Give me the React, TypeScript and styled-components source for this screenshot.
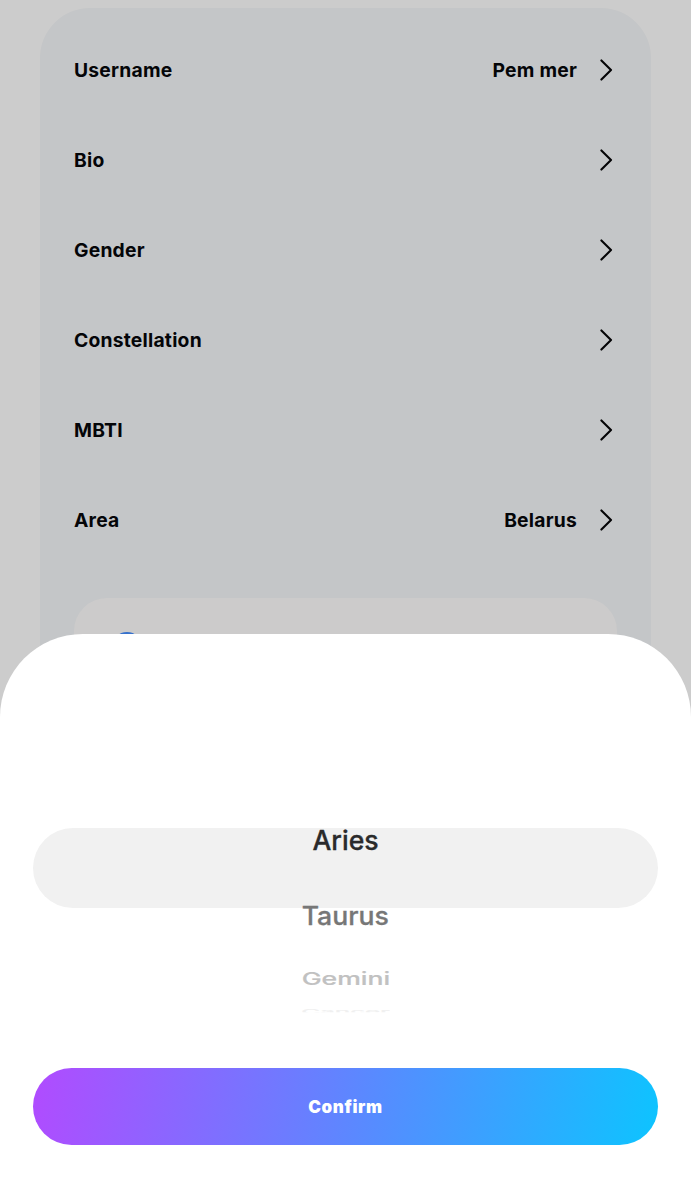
import React from "react";
import styled, { createGlobalStyle } from "styled-components";

const GlobalStyle = createGlobalStyle`
  *, *::before, *::after { box-sizing: border-box; }
  body {
    margin: 0;
    font-family: Inter, "Liberation Sans", sans-serif;
    background: #fff;
  }
`;

const Screen = styled.div`
  position: relative;
  height: 1200px;
  overflow: hidden;
  padding: 8px 40px 0;
  background: #fff;
`;

const ProfileCard = styled.main`
  display: flex;
  flex-direction: column;
  height: 900px;
  padding: 16.5px 34px 0;
  border-radius: 50px;
  background: #f6f8fa;
`;

const Row = styled.div`
  display: flex;
  align-items: center;
  height: 90.1px;
  padding-right: 4px;
  color: #06070a;
  font-size: 19.3px;
  font-weight: 700;
  letter-spacing: 0.22px;
`;

const RowLabel = styled.span`
  flex: 1;
`;

const RowValue = styled.span`
  margin-right: 23px;
`;

const InnerCard = styled.section`
  height: 160px;
  margin-top: 33px;
  padding: 33.5px 38px;
  border-radius: 33px;
  background: #fffefe;
`;

const Dot = styled.div`
  width: 30px;
  height: 30px;
  border-radius: 50%;
  background: #458eff;
`;

const Overlay = styled.div`
  position: absolute;
  inset: 0;
  display: flex;
  flex-direction: column;
  justify-content: flex-end;
  background: rgba(0, 0, 0, 0.2);
`;

const Sheet = styled.section`
  height: 566px;
  padding: 169px 33px 0;
  border-radius: 83px 83px 0 0;
  background: #fff;
`;

const Picker = styled.div`
  display: grid;
  height: 265px;
  > * { grid-area: 1 / 1; }
`;

const Highlight = styled.div`
  height: 80px;
  margin-top: 25px;
  border-radius: 40px;
  background: #f1f1f1;
`;

const Wheel = styled.div`
  display: flex;
  flex-direction: column;
  align-items: center;
`;

const WheelSlot = styled.div<{ $height: number }>`
  display: flex;
  align-items: center;
  justify-content: center;
  height: ${(p) => p.$height}px;
`;

const WheelText = styled.span<{ $color: string; $sx: number; $sy: number; $cut?: number }>`
  color: ${(p) => p.$color};
  font-size: 27px;
  line-height: 33px;
  font-weight: 500;
  -webkit-text-stroke: 0.3px ${(p) => p.$color};
  transform: scale(${(p) => p.$sx}, ${(p) => p.$sy});
  clip-path: ${(p) => (p.$cut ? `inset(0 0 ${p.$cut}% 0)` : "none")};
`;

const ConfirmButton = styled.button`
  display: block;
  width: 100%;
  height: 77px;
  padding: 0;
  border: 0;
  border-radius: 39px;
  color: #fff;
  background: linear-gradient(100deg, #b14bff 0%, #5b88ff 52%, #0dc4ff 100%);
  font-family: inherit;
  font-size: 17px;
  font-weight: 900;
  letter-spacing: 0.6px;
`;

const rows = [
  { label: "Username", value: "Pem mer" },
  { label: "Bio" },
  { label: "Gender" },
  { label: "Constellation" },
  { label: "MBTI" },
  { label: "Area", value: "Belarus" },
];

const signs = [
  { name: "Aries", height: 75, color: "#2a2a2b", sx: 0.985, sy: 1 },
  { name: "Taurus", height: 75, color: "#777", sx: 0.985, sy: 0.95 },
  { name: "Gemini", height: 50, color: "#c1c1c1", sx: 0.985, sy: 0.64 },
  { name: "Cancer", height: 17, color: "#f0f0f0", sx: 0.95, sy: 0.24, cut: 42 },
];

function Chevron() {
  return (
    <svg width="13" height="22" viewBox="0 0 13 22" fill="none" aria-hidden="true">
      <path d="M1.4 1.4 11 11 1.4 20.6" stroke="#050608" strokeWidth="2.1" strokeLinecap="round" strokeLinejoin="round" />
    </svg>
  );
}

export default function App() {
  return (
    <>
      <GlobalStyle />
      <Screen>
        <ProfileCard>
          {rows.map((r) => (
            <Row key={r.label}>
              <RowLabel>{r.label}</RowLabel>
              {r.value && <RowValue>{r.value}</RowValue>}
              <Chevron />
            </Row>
          ))}
          <InnerCard>
            <Dot />
          </InnerCard>
        </ProfileCard>
        <Overlay>
          <Sheet>
            <Picker>
              <Highlight />
              <Wheel>
                {signs.map((s) => (
                  <WheelSlot key={s.name} $height={s.height}>
                    <WheelText $color={s.color} $sx={s.sx} $sy={s.sy} $cut={s.cut}>{s.name}</WheelText>
                  </WheelSlot>
                ))}
              </Wheel>
            </Picker>
            <ConfirmButton type="button">Confirm</ConfirmButton>
          </Sheet>
        </Overlay>
      </Screen>
    </>
  );
}
